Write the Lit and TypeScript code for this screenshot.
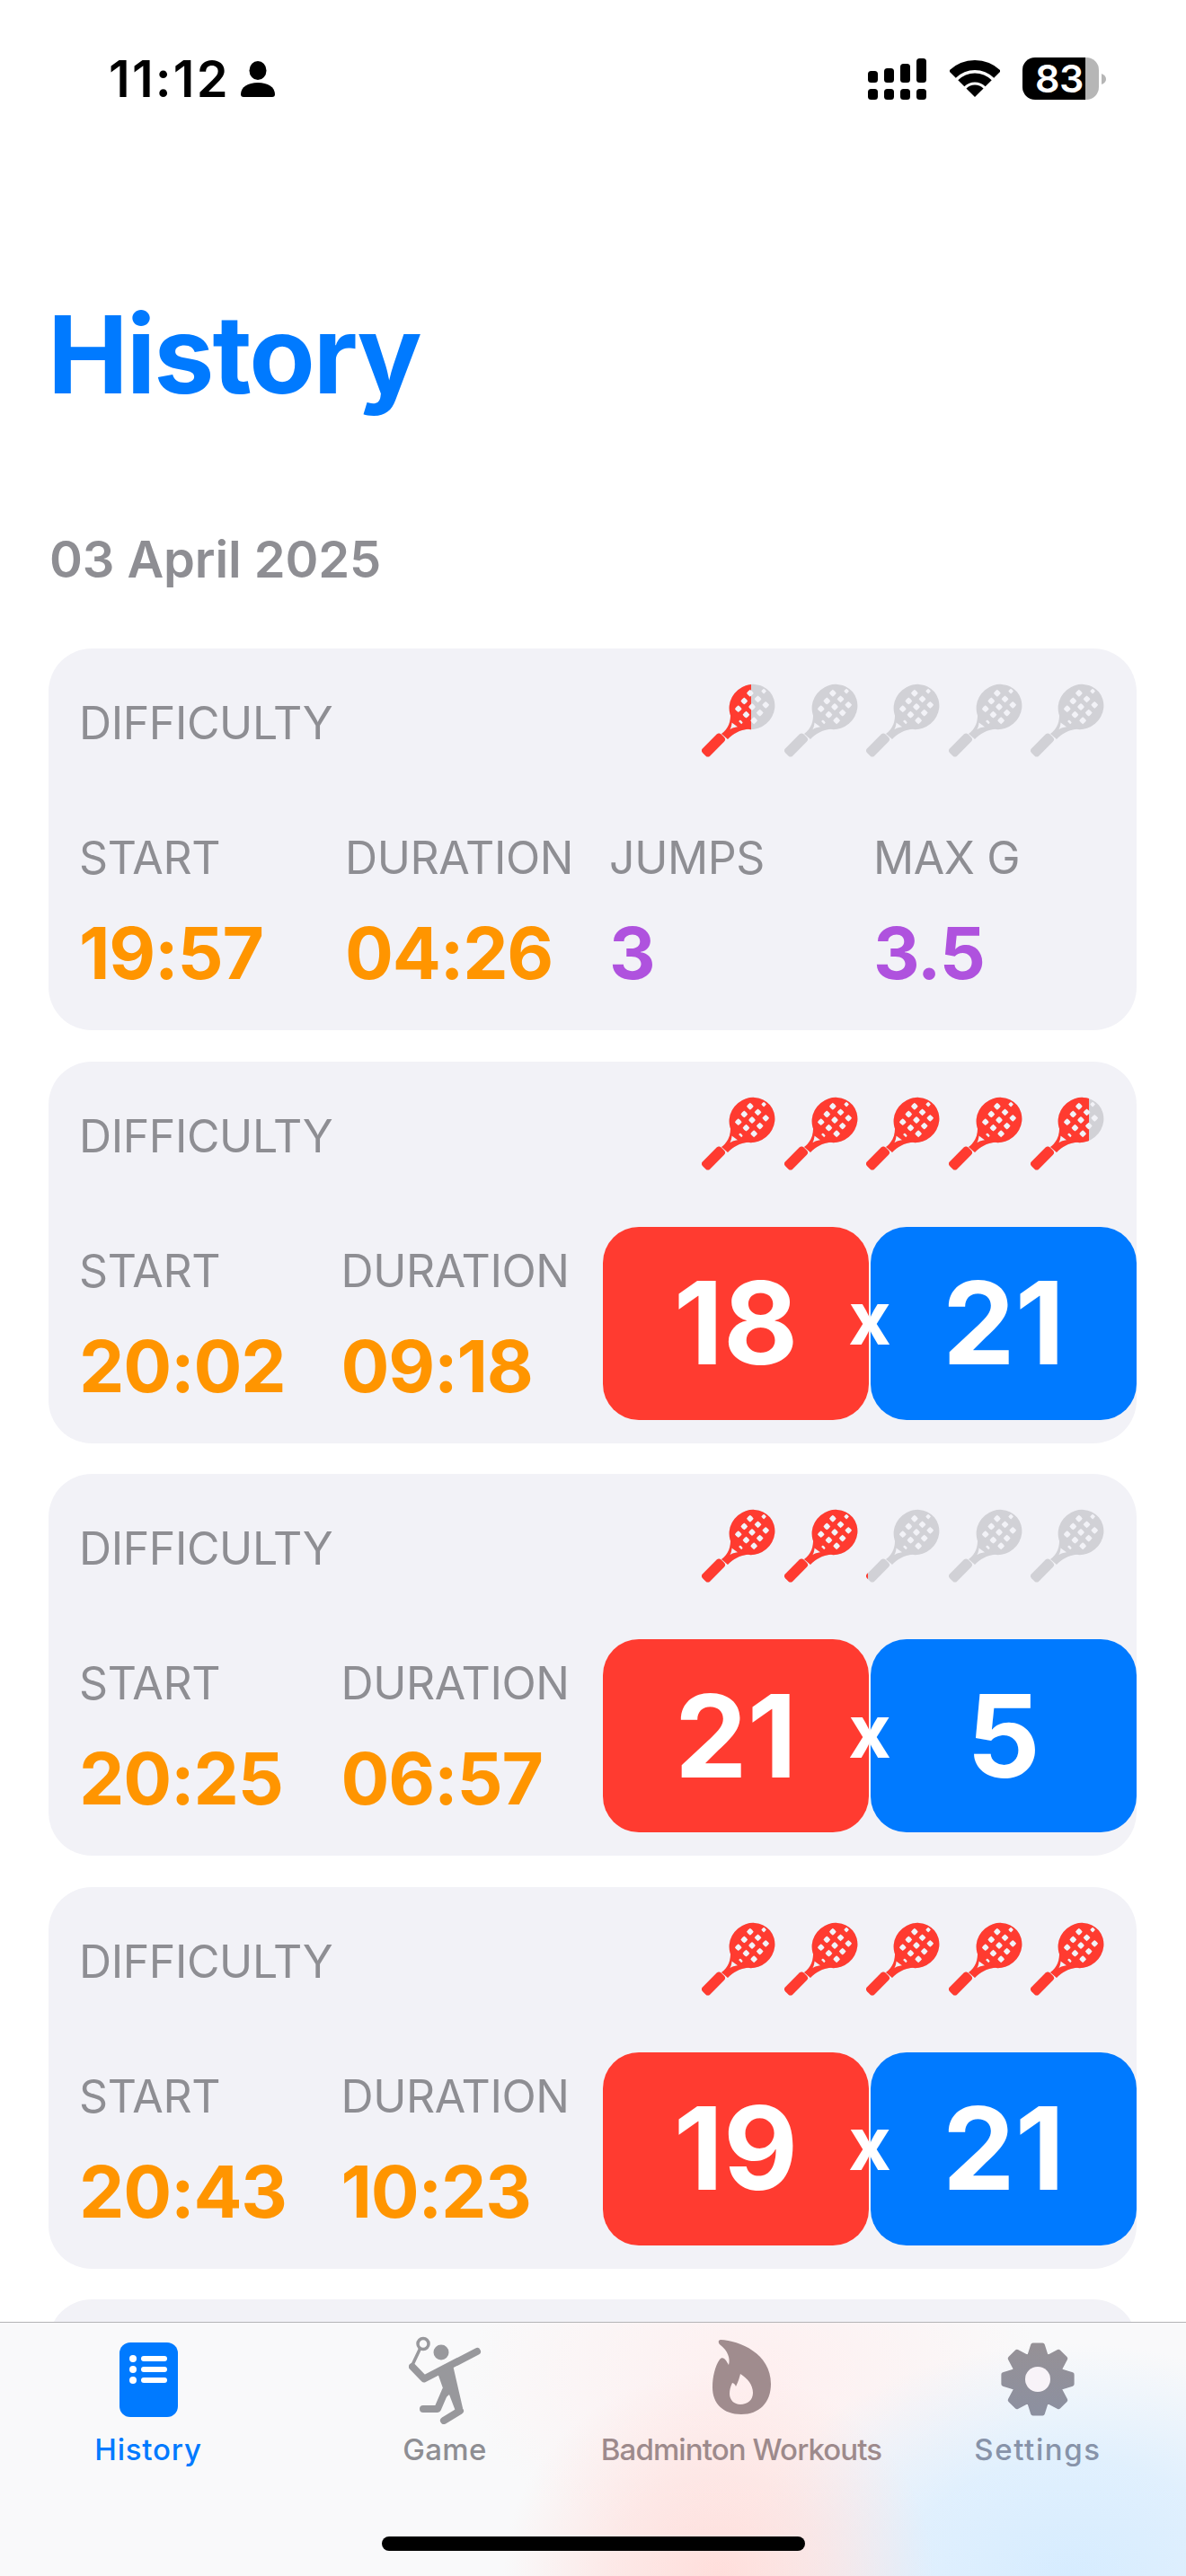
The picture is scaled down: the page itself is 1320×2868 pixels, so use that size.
import { LitElement, html, css, svg } from "lit";
import { customElement } from "lit/decorators.js";

interface Session {
  rating: number;
  start: string;
  duration: string;
  jumps?: string;
  maxG?: string;
  red?: number;
  blue?: number;
}

const sessions: Session[] = [
  { rating: 0.67, start: "19:57", duration: "04:26", jumps: "3", maxG: "3.5" },
  { rating: 4.79, start: "20:02", duration: "09:18", red: 18, blue: 21 },
  { rating: 2.03, start: "20:25", duration: "06:57", red: 21, blue: 5 },
  { rating: 5, start: "20:43", duration: "10:23", red: 19, blue: 21 },
];

function headPath(): string {
  const cx = 56, cy = 26, rx = 26, ry = 24.5, rot = -40;
  const t = (rot * Math.PI) / 180;
  const c = Math.cos(t), s = Math.sin(t);
  let d = `M${cx - rx * c} ${cy - rx * s}A${rx} ${ry} ${rot} 1 1 ${cx + rx * c} ${cy + rx * s}A${rx} ${ry} ${rot} 1 1 ${cx - rx * c} ${cy - rx * s}Z`;
  const step = 7.7, g = (-8 * Math.PI) / 180;
  const gc = Math.cos(g), gs = Math.sin(g);
  for (let i = -6; i <= 6; i++) {
    for (let j = -6; j <= 6; j++) {
      if ((i + j) % 2 !== 0) continue;
      const ox = i * step, oy = j * step;
      const lx = ox * gc - oy * gs, ly = ox * gs + oy * gc;
      const ux = lx * c + ly * s, uy = -lx * s + ly * c;
      const e = (ux * ux) / (22.5 * 22.5) + (uy * uy) / (21 * 21);
      if (e > 1) continue;
      const r = e > 0.72 ? 2.8 : 3.9;
      const k = r * 0.62;
      const hx = cx + lx, hy = cy + ly;
      const f = (n: number) => n.toFixed(2);
      d += `M${f(hx - r)} ${f(hy)}Q${f(hx - k)} ${f(hy - k)} ${f(hx)} ${f(hy - r)}Q${f(hx + k)} ${f(hy - k)} ${f(hx + r)} ${f(hy)}Q${f(hx + k)} ${f(hy + k)} ${f(hx)} ${f(hy + r)}Q${f(hx - k)} ${f(hy + k)} ${f(hx - r)} ${f(hy)}Z`;
    }
  }
  return d;
}
const HEAD = headPath();

const racket = (cls: string) => html`<svg class="racket ${cls}" viewBox="0 0 82 82" width="82" height="82">
  <path fill-rule="evenodd" d=${HEAD}></path>
  <path fill-rule="evenodd" d="M32 33C32.500 42 30 50 22 56L29 62C35 55.500 42 52 52 50.500L44 45ZM33.500 43.500L40 48.300C36.500 48.800 34 49.600 31.400 51.200C32.600 49 33.300 46.500 33.500 43.500Z"></path>
  <rect x="-14.500" y="-5.800" width="29" height="11.600" rx="3.500" transform="translate(13 68.500) rotate(-45)"></rect>
</svg>`;

function gearPath(): string {
  const pts: string[] = [];
  const n = 8, cx = 41, cy = 41, R = 38.5, r = 27.5;
  for (let i = 0; i < n; i++) {
    const a = (i * 2 * Math.PI) / n - Math.PI / 2;
    const add = (rad: number, da: number) =>
      pts.push(`${(cx + rad * Math.cos(a + da)).toFixed(2)} ${(cy + rad * Math.sin(a + da)).toFixed(2)}`);
    add(r, -0.34);
    add(R, -0.14);
    add(R, 0.14);
    add(r, 0.34);
  }
  return `M${pts.join("L")}Z`;
}
const GEAR = gearPath();

function wedge(r1: number, r2: number): string {
  const cx = 28, cy = 41, a = Math.PI / 4;
  const sx = Math.sin(a), cy2 = Math.cos(a);
  const p = (r: number, sign: number) => `${(cx + sign * r * sx).toFixed(2)} ${(cy - r * cy2).toFixed(2)}`;
  if (r1 === 0) return `M${cx} ${cy}L${p(r2, -1)}A${r2} ${r2} 0 0 1 ${p(r2, 1)}Z`;
  return `M${p(r1, -1)}L${p(r2, -1)}A${r2} ${r2} 0 0 1 ${p(r2, 1)}L${p(r1, 1)}A${r1} ${r1} 0 0 0 ${p(r1, -1)}Z`;
}

@customElement("app-root")
export class AppRoot extends LitElement {
  static styles = css`
    :host {
      display: block;
      position: relative;
      width: 1320px;
      height: 2868px;
      overflow: hidden;
      background: #fff;
      font-family: Inter, "Liberation Sans", sans-serif;
    }
    .status {
      height: 150px;
      box-sizing: border-box;
      padding: 62px 89px 0 121px;
      display: flex;
      align-items: flex-start;
    }
    .time {
      font-size: 56px;
      line-height: 52px;
      font-weight: 600;
      color: #000;
      letter-spacing: 2.2px;
    }
    .person { margin: 6px 0 0 12.500px; }
    .spacer { flex: 1; }
    .signal { margin-top: 3px; }
    .wifi { margin: 5px 0 0 26px; }
    .battery {
      margin: 2px 0 0 25px;
      width: 85px;
      height: 47px;
      border-radius: 14px;
      background: linear-gradient(90deg, #000 0 70px, #b6b6b6 70px);
      color: #fff;
      font-size: 43px;
      line-height: 47px;
      font-weight: 600;
      box-sizing: border-box;
      padding-left: 14px;
      letter-spacing: -0.5px;
    }
    .nub { margin: 20px 0 0 3px; }
    h1 {
      margin: 180px 0 0 0;
      padding-left: 53px;
      font-size: 120px;
      line-height: 130px;
      font-weight: 700;
      color: #007aff;
      letter-spacing: -2px;
    }
    .date {
      margin-top: 123px;
      padding-left: 55px;
      font-size: 56px;
      line-height: 80px;
      font-weight: 600;
      color: #8e8e93;
      letter-spacing: -0.1px;
    }
    .list {
      margin: 59px 55px 0 54px;
      display: flex;
      flex-direction: column;
      gap: 34.500px;
    }
    .card {
      height: 425px;
      box-sizing: border-box;
      flex: none;
      background: #f2f2f7;
      border-radius: 48px;
      padding: 39px 0 0 34px;
    }
    .top {
      display: flex;
      justify-content: space-between;
      align-items: center;
      padding-right: 36px;
      height: 82px;
    }
    .label {
      font-size: 50px;
      line-height: 50px;
      font-weight: 400;
      color: #8e8e93;
      letter-spacing: -0.4px;
      white-space: nowrap;
    }
    .top .label { position: relative; top: 3px; }
    .rackets { display: flex; gap: 9.500px; }
    .slot { position: relative; width: 82px; height: 82px; }
    .racket { display: block; }
    .racket.off { fill: #d1d1d6; }
    .racket.on { fill: #ff3b30; }
    .fill {
      position: absolute;
      left: 0;
      top: 0;
      height: 82px;
      overflow: hidden;
    }
    .row {
      margin-top: 63px;
      height: 215px;
      display: flex;
    }
    .stat {
      width: 294px;
      flex: none;
      padding-top: 24px;
      box-sizing: border-box;
    }
    .stat:first-child { width: 296px; }
    .row.game .stat { width: 291.500px; }
    .value {
      margin-top: 31px;
      font-size: 80px;
      line-height: 100px;
      font-weight: 700;
      letter-spacing: -1.200px;
      color: #ff9500;
    }
    .value.purple { color: #af52de; }
    .score {
      position: relative;
      flex: 1;
      display: grid;
      grid-template-columns: 1fr 1fr;
      gap: 2px;
    }
    .side {
      border-radius: 40px;
      display: flex;
      align-items: center;
      justify-content: center;
      color: #fff;
      font-size: 128px;
      font-weight: 700;
      letter-spacing: 0;
      line-height: 1;
    }
    .side.red { background: #ff3b30; }
    .side.blue { background: #007aff; }
    .x {
      position: absolute;
      left: 50%;
      top: 50%;
      transform: translate(-50%, -56%);
      color: #fff;
      font-size: 82px;
      font-weight: 700;
      line-height: 1;
    }
    .tabbar {
      position: absolute;
      left: 0;
      right: 0;
      bottom: 0;
      height: 283px;
      box-sizing: border-box;
      border-top: 1.500px solid #b4b4b6;
      background:
        radial-gradient(ellipse 240px 230px at 800px 283px, #ffdedb 0%, rgba(255, 222, 219, 0.6) 50%, rgba(255, 222, 219, 0) 100%),
        radial-gradient(ellipse 370px 260px at 1190px 283px, #d6ecff 0%, rgba(214, 236, 255, 0.7) 50%, rgba(214, 236, 255, 0) 100%),
        radial-gradient(ellipse 320px 200px at 840px 60px, rgba(255, 238, 238, 0.9) 0%, rgba(255, 238, 238, 0) 100%),
        #f9f9fa;
      display: grid;
      grid-template-columns: repeat(4, 330px);
    }
    .tab {
      display: flex;
      flex-direction: column;
      align-items: center;
      font-size: 33px;
      line-height: 40px;
      font-weight: 500;
      color: #8e8e93;
      letter-spacing: 0.3px;
      white-space: nowrap;
    }
    .tab .ico {
      height: 108.500px;
      margin-top: 12.500px;
      display: flex;
      align-items: flex-start;
      justify-content: center;
    }
    .i-hist, .i-gear { margin-top: 9px; }
    .i-game { margin-top: 2px; }
    .i-fire { margin-top: 5px; }
    .tab.active { color: #007aff; letter-spacing: 0.8px; }
    .tab.fire { color: #9d8a8c; letter-spacing: -0.9px; }
    .tab.gear { color: #8793a9; letter-spacing: 1.600px; }
    .home {
      position: absolute;
      left: 425px;
      top: 2824px;
      width: 471px;
      height: 16px;
      border-radius: 8px;
      background: #000;
    }
  `;

  private stars(rating: number) {
    return [0, 1, 2, 3, 4].map((i) => {
      const f = Math.max(0, Math.min(1, rating - i));
      return html`<div class="slot">
        ${racket("off")}
        ${f > 0 ? html`<div class="fill" style="width:${f * 82}px">${racket("on")}</div>` : ""}
      </div>`;
    });
  }

  private card(s: Session) {
    const game = s.red !== undefined;
    return html`<div class="card">
      <div class="top">
        <div class="label">DIFFICULTY</div>
        <div class="rackets">${this.stars(s.rating)}</div>
      </div>
      <div class="row ${game ? "game" : ""}">
        <div class="stat"><div class="label">START</div><div class="value">${s.start}</div></div>
        <div class="stat"><div class="label">DURATION</div><div class="value">${s.duration}</div></div>
        ${game
          ? html`<div class="score">
              <div class="side red">${s.red}</div>
              <div class="side blue">${s.blue}</div>
              <div class="x">x</div>
            </div>`
          : html`<div class="stat"><div class="label">JUMPS</div><div class="value purple">${s.jumps}</div></div>
              <div class="stat"><div class="label">MAX G</div><div class="value purple">${s.maxG}</div></div>`}
      </div>
    </div>`;
  }

  render() {
    return html`
      <div class="status">
        <div class="time">11:12</div>
        <svg class="person" width="38" height="40" viewBox="0 0 38 40">
          <ellipse cx="19" cy="10.500" rx="9.500" ry="10.500" fill="#000"></ellipse>
          <path d="M0 37C0 29 8 24 19 24S38 29 38 37Q38 40 35 40H3Q0 40 0 37Z" fill="#000"></path>
        </svg>
        <div class="spacer"></div>
        <svg class="signal" width="65" height="46" viewBox="0 0 65 46">
          <rect x="0" y="14" width="11" height="13" rx="3.500"></rect>
          <rect x="18" y="11" width="11" height="16" rx="3.500"></rect>
          <rect x="36" y="6" width="11" height="21" rx="3.500"></rect>
          <rect x="54" y="0" width="11" height="27" rx="3.500"></rect>
          <rect x="0" y="34" width="11" height="12" rx="3.500"></rect>
          <rect x="18" y="34" width="11" height="12" rx="3.500"></rect>
          <rect x="36" y="34" width="11" height="12" rx="3.500"></rect>
          <rect x="54" y="34" width="11" height="12" rx="3.500"></rect>
        </svg>
        <svg class="wifi" width="56" height="42" viewBox="0 0 56 42">
          <g fill="#000">
            ${svg`<path d=${wedge(30, 41)}></path><path d=${wedge(16.5, 26.5)}></path><path d=${wedge(0, 13.5)}></path>`}
          </g>
        </svg>
        <div class="battery">83</div>
        <svg class="nub" width="5" height="12" viewBox="0 0 5 12"><path d="M0 0Q5 2 5 6T0 12Z" fill="#b6b6b6"></path></svg>
      </div>
      <h1>History</h1>
      <div class="date">03 April 2025</div>
      <div class="list">
        ${sessions.map((s) => this.card(s))}
        <div class="card"></div>
      </div>
      <div class="tabbar">
        <div class="tab active">
          <div class="ico">
            <svg class="i-hist" width="65" height="83" viewBox="0 0 65 83">
              <rect width="65" height="83" rx="12" fill="#007aff"></rect>
              <g fill="#fff">
                <circle cx="15" cy="18" r="4"></circle><circle cx="15" cy="30" r="4"></circle><circle cx="15" cy="42" r="4"></circle>
                <rect x="24" y="15" width="29" height="6" rx="3"></rect><rect x="24" y="27" width="29" height="6" rx="3"></rect><rect x="24" y="39" width="29" height="6" rx="3"></rect>
              </g>
            </svg>
          </div>
          <div class="name">History</div>
        </div>
        <div class="tab">
          <div class="ico">
            <svg class="i-game" width="81" height="98" viewBox="0 0 81 98">
              <g fill="none" stroke="#98989c" stroke-linecap="round" stroke-linejoin="round">
                <ellipse cx="16" cy="8.500" rx="6" ry="6" stroke-width="3.500"></ellipse>
                <path d="M12 15L3.500 33" stroke-width="3.500"></path>
                <path d="M4 34L17 47.500L76 17" stroke-width="8"></path>
                <path d="M57 83L39 94" stroke-width="8"></path>
                <path d="M16 81H32L41 60" stroke-width="8"></path>
              </g>
              <ellipse cx="36" cy="18" rx="8.500" ry="8.500" fill="#98989c"></ellipse>
              <path d="M32 41L49 32L60 80L53 86L45 65L37 72L38 58Z" fill="#98989c"></path>
            </svg>
          </div>
          <div class="name">Game</div>
        </div>
        <div class="tab fire">
          <div class="ico">
            <svg class="i-fire" width="65" height="84" viewBox="0 0 65 84">
              <path fill="#a08c8e" fill-rule="evenodd" d="M9 1C30 2 65 16 65 50C65 71 52 84 32 84C12 84 0 72 0 54C0 42 3 30 8 23C10 20 13 21 15 24L18 29C20 22 17 13 9 7C6 5 6 1 9 1ZM31 39C30 43 29 47 26 53C25 50 23 49 22 49C20 53 19 57 19 61C19 68 24 73 31 73C39 73 45 68 45 60C45 51 39 44 31 39Z"></path>
            </svg>
          </div>
          <div class="name">Badminton Workouts</div>
        </div>
        <div class="tab gear">
          <div class="ico">
            <svg class="i-gear" width="82" height="82" viewBox="0 0 82 82">
              <defs><linearGradient id="gearfill" x1="0" y1="0" x2="0" y2="1"><stop offset="0" stop-color="#969196"></stop><stop offset="1" stop-color="#8c90a0"></stop></linearGradient></defs>
              <path d=${GEAR} fill="url(#gearfill)" stroke="url(#gearfill)" stroke-width="5" stroke-linejoin="round"></path>
              <ellipse cx="41" cy="41" rx="14" ry="14" fill="#f8f3f8"></ellipse>
            </svg>
          </div>
          <div class="name">Settings</div>
        </div>
      </div>
      <div class="home"></div>
    `;
  }
}
